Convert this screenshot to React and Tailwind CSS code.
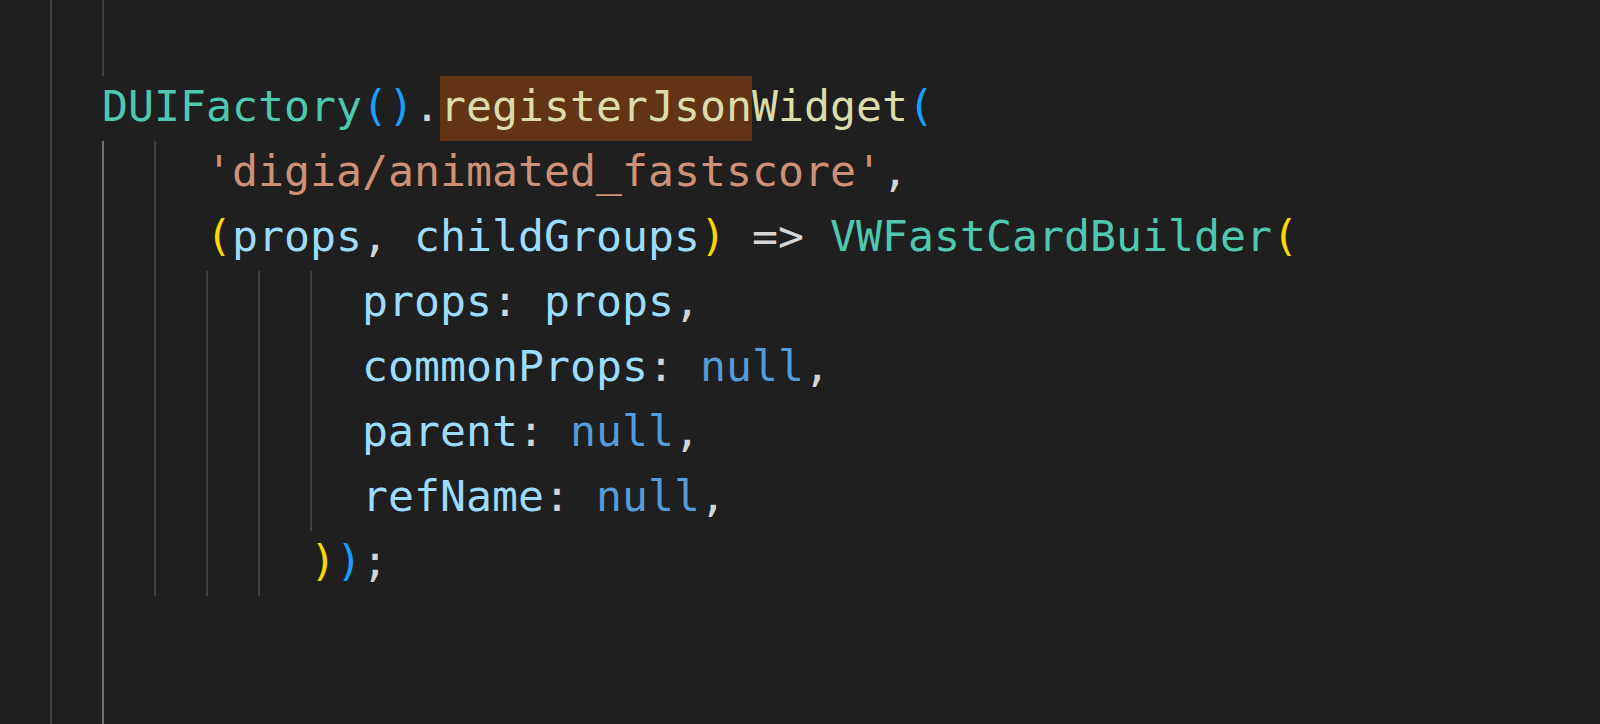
const C = {
  type: 'text-[#4ec9b0]',
  fn: 'text-[#dcdcaa]',
  str: 'text-[#ce9178]',
  v: 'text-[#9cdcfe]',
  kw: 'text-[#569cd6]',
  p: 'text-[#d4d4d4]',
  gold: 'text-[#ffd700]',
  blue: 'text-[#179fff]',
};

// each line: guides (indent levels after col 0), active guide level, tokens
const lines = [
  { guides: 2, active: false, tokens: [] },
  { guides: 2, active: false, tokens: [] },
  {
    guides: 1,
    tokens: [
      ['DUIFactory', C.type],
      ['()', C.blue],
      ['.', C.p],
      ['registerJson', C.fn, true],
      ['Widget', C.fn],
      ['(', C.blue],
    ],
  },
  {
    guides: 3,
    active: true,
    tokens: [
      ["'digia/animated_fastscore'", C.str],
      [',', C.p],
    ],
  },
  {
    guides: 3,
    active: true,
    tokens: [
      ['(', C.gold],
      ['props', C.v],
      [', ', C.p],
      ['childGroups', C.v],
      [')', C.gold],
      [' => ', C.p],
      ['VWFastCardBuilder', C.type],
      ['(', C.gold],
    ],
  },
  {
    guides: 6,
    active: true,
    tokens: [
      ['props', C.v],
      [': ', C.p],
      ['props', C.v],
      [',', C.p],
    ],
  },
  {
    guides: 6,
    active: true,
    tokens: [
      ['commonProps', C.v],
      [': ', C.p],
      ['null', C.kw],
      [',', C.p],
    ],
  },
  {
    guides: 6,
    active: true,
    tokens: [
      ['parent', C.v],
      [': ', C.p],
      ['null', C.kw],
      [',', C.p],
    ],
  },
  {
    guides: 6,
    active: true,
    tokens: [
      ['refName', C.v],
      [': ', C.p],
      ['null', C.kw],
      [',', C.p],
    ],
  },
  {
    guides: 5,
    active: true,
    tokens: [
      [')', C.gold],
      [')', C.blue],
      [';', C.p],
    ],
  },
  { guides: 2, active: true, tokens: [] },
  { guides: 2, active: true, tokens: [] },
];

const Line = ({ line }) => {
  const segs = [];
  for (let i = 0; i < line.guides; i++) {
    const bright = i === 1 && line.active;
    segs.push(
      <span
        key={i}
        className={`w-[52px] h-full shrink-0 border-l-2 ${bright ? 'border-[#6e6e6e]' : 'border-[#404040]'}`}
      />
    );
  }
  return (
    <div className="flex h-[65px]">
      <span className="w-[50px] h-full shrink-0" />
      {segs}
      <span className="flex h-full">
        {line.tokens.map(([t, cls, hl], j) => (
          <span
            key={j}
            className={`block h-full whitespace-pre leading-[61.5px] ${cls} ${hl ? 'bg-[#623314]' : ''}`}
          >
            {t}
          </span>
        ))}
      </span>
    </div>
  );
};

export default function App() {
  return (
    <div
      className="w-[1600px] h-[724px] overflow-hidden bg-[#1f1f1f] text-[43.19px]"
      style={{ fontFamily: '"DejaVu Sans Mono", "Liberation Mono", monospace' }}
    >
      <div className="-mt-[54px]">
        {lines.map((line, i) => (
          <Line key={i} line={line} />
        ))}
      </div>
    </div>
  );
}
